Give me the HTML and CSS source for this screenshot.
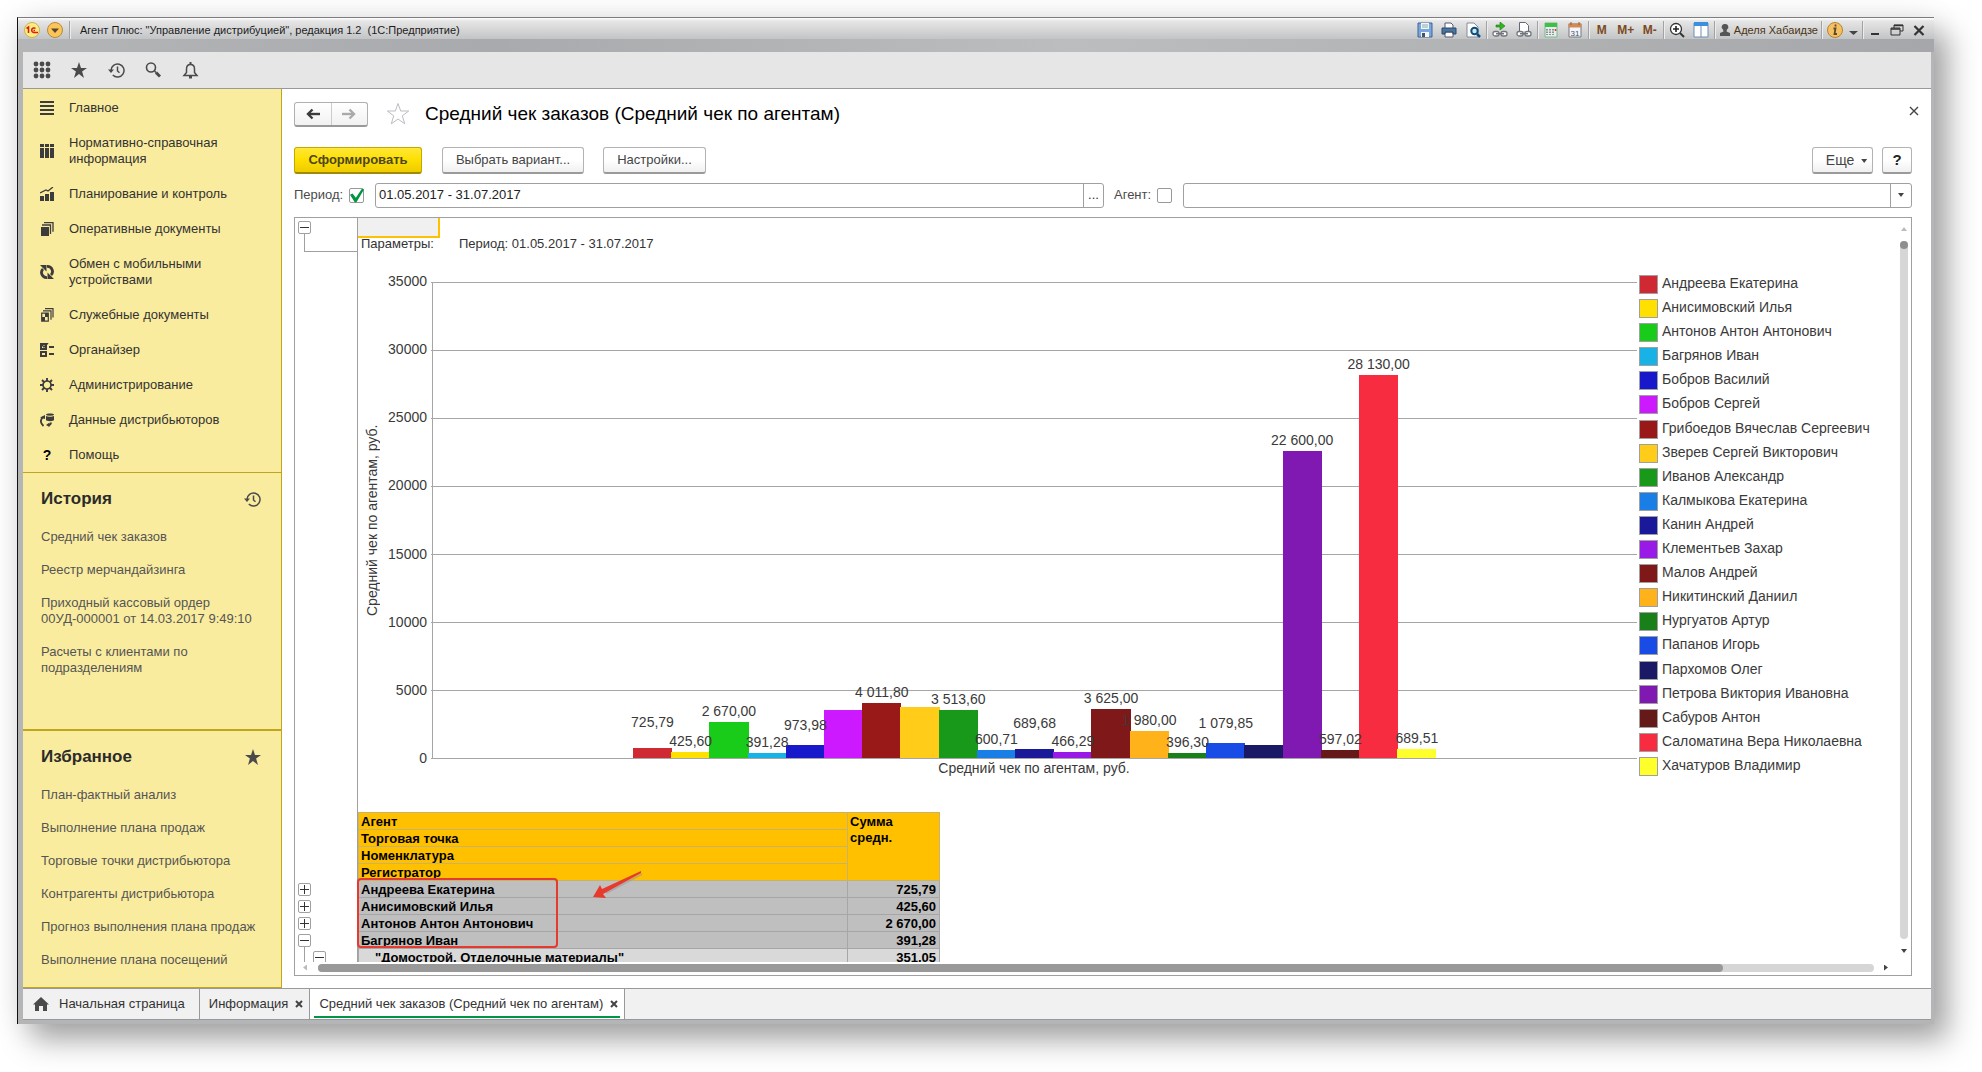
FILE: index.html
```html
<!DOCTYPE html>
<html lang="ru">
<head>
<meta charset="utf-8">
<title>Агент Плюс: Управление дистрибуцией</title>
<link rel="stylesheet" href="styles.css">
</head>
<body>
<svg class="sprite" aria-hidden="true">
  <symbol id="star" viewBox="0 0 16 16"><path fill="currentColor" d="M8 0l2 6h6l-4.900 3.600L13 16l-5-4-5 4 1.900-6.400L0 6h6z"/></symbol>
  <symbol id="history" viewBox="0 0 17 16"><g fill="none" stroke="currentColor"><path stroke-width="1.500" d="M3 8a6.500 6.500 0 1 1 1.800 4.500M9.500 4v4.500l2 1.800"/></g><path fill="currentColor" d="M0 7h6L3 10.500z"/></symbol>
</svg>
<div class="window">
  <header class="titlebar">
    <div class="title-row">
      <svg class="i18" viewBox="0 0 18 18"><circle cx="9" cy="9" r="7.500" fill="#ffec80" stroke="#c9b25a"/><path d="M3.500 7.500L5.500 6v6M12.500 7.500a2.300 2.300 0 1 0-2 4h4.500M12 9.500h-1.500" fill="none" stroke="#d8201a" stroke-width="1.600"/></svg>
      <button class="flat menu-ball" aria-label="Меню"><svg class="i18" viewBox="0 0 18 18"><circle cx="9" cy="9" r="7.500" fill="#fbc55a" stroke="#b98a3a"/><path d="M5 7.500h8L9 12z" fill="#5a4630"/></svg></button>
      <span class="sep"></span>
      <span class="app-name">Агент Плюс: "Управление дистрибуцией", редакция 1.2&nbsp; (1С:Предприятие)</span>
      <div class="tools">
        <button class="flat w24" aria-label="Сохранить"><svg class="i16" viewBox="0 0 16 16"><path d="M1 1h14v14H1z" fill="#7ba7dc" stroke="#3d6599"/><path d="M4 1h8v6H4zM4 10h8v5H4z" fill="#f2f6fa"/><path d="M5 3h6M5 5h6" stroke="#8aa"/><path d="M5 11h3v4H5z" fill="#456"/></svg></button>
        <button class="flat w24" aria-label="Печать"><svg class="i16" viewBox="0 0 16 16"><path d="M4 6V1h6l2 2v3M4 10h8v5H4z" fill="#fff" stroke="#557"/><path d="M1 6h14v6h-3v-2H4v2H1z" fill="#4d749b" stroke="#28496c"/></svg></button>
        <button class="flat w24" aria-label="Просмотр"><svg class="i16" viewBox="0 0 16 16"><path d="M2 1h7l4 4v10H2z" fill="#fff" stroke="#889"/><circle cx="9.500" cy="9" r="3.200" fill="#cfe8f5" stroke="#0d4d7c" stroke-width="2"/><path d="M12 12l3 3" stroke="#0d4d7c" stroke-width="2.500"/></svg></button>
        <span class="sep"></span>
        <button class="flat w24" aria-label="Получить ссылку"><svg class="i16" viewBox="0 0 16 16"><path d="M4 3h4V0l5 4-5 4V5H4z" fill="#2fb51e" stroke="#187c10" stroke-width=".6"/><rect x="1" y="9.500" width="6" height="4.500" rx="2" fill="#fff" stroke="#70757c" stroke-width="1.300"/><rect x="9" y="9.500" width="6" height="4.500" rx="2" fill="#fff" stroke="#70757c" stroke-width="1.300"/><path d="M4 11.700h8" stroke="#70757c" stroke-width="1.500"/></svg></button>
        <button class="flat w24" aria-label="Перейти по ссылке"><svg class="i16" viewBox="0 0 16 16"><path d="M3.500 9V.5h6l3 3V9" fill="#fff" stroke="#667"/><rect x="1" y="9.500" width="6" height="4.500" rx="2" fill="#fff" stroke="#70757c" stroke-width="1.300"/><rect x="9" y="9.500" width="6" height="4.500" rx="2" fill="#fff" stroke="#70757c" stroke-width="1.300"/><path d="M4 11.700h8" stroke="#70757c" stroke-width="1.500"/></svg></button>
        <span class="sep"></span>
        <button class="flat w24" aria-label="Калькулятор"><svg class="i16" viewBox="0 0 16 16"><path d="M2 1h12v14H2z" fill="#e8ecee" stroke="#7b8"/><path d="M2 1h12v4H2z" fill="#3fbf45"/><path d="M4 7v6M7 7v6M10 7v6" stroke="#677" stroke-width="1.500" stroke-dasharray="1.500 1"/><path d="M12.500 7v2" stroke="#d33" stroke-width="1.500"/></svg></button>
        <button class="flat w24" aria-label="Календарь"><svg class="i16" viewBox="0 0 16 16"><path d="M2 2h12v13H2z" fill="#f5f5f7" stroke="#778"/><path d="M1.500 1.500h13v4h-13z" fill="#d08a55"/><path d="M4 0v3M12 0v3" stroke="#965a30"/><text x="8" y="13.500" font-size="8" text-anchor="middle" fill="#456">31</text></svg></button>
        <span class="sep"></span>
        <button class="flat w24 mem">M</button><button class="flat w24 mem">M+</button><button class="flat w24 mem">M-</button>
        <span class="sep"></span>
        <button class="flat w24" aria-label="Масштаб"><svg class="i16" viewBox="0 0 16 16"><circle cx="7" cy="7" r="5.500" fill="#fff" stroke="#333" stroke-width="1.300"/><path d="M7 4v6M4 7h6" stroke="#222" stroke-width="1.600"/><path d="M11 11l4 4" stroke="#333" stroke-width="2"/></svg></button>
        <button class="flat w24" aria-label="Панели"><svg class="i16" viewBox="0 0 16 16"><path d="M1 1h14v14H1z" fill="#fff" stroke="#6d8fb3"/><path d="M1 0h14v4H1z" fill="#3c8fdd"/><path d="M8 4v11" stroke="#6d8fb3"/></svg></button>
        <span class="sep"></span>
        <svg class="i14 person" viewBox="0 0 14 14"><path d="M7 1a3 3 0 0 1 2 5.500l-.5 2L12 10v3H2v-3l3.500-1.500-.5-2A3 3 0 0 1 7 1z" fill="#555"/></svg>
        <span class="user">Аделя Хабаидзе</span>
        <span class="sep"></span>
        <button class="flat w24" aria-label="О программе"><svg class="i18" viewBox="0 0 18 18"><circle cx="9" cy="9" r="7.500" fill="#f5c061" stroke="#b78332"/><path d="M9.500 3.500v2M7.500 7.500h2l-1 5.500h2.500" fill="none" stroke="#5b4a30" stroke-width="1.800"/></svg></button>
        <svg class="i14" viewBox="0 0 14 14"><path d="M2 8h9l-4.500 4z" fill="#444"/></svg>
        <span class="sep"></span>
        <button class="flat w22" aria-label="Свернуть"><svg class="i14" viewBox="0 0 14 14"><path d="M3 11h8" stroke="#333" stroke-width="2"/></svg></button>
        <button class="flat w22" aria-label="Восстановить"><svg class="i14" viewBox="0 0 14 14"><path d="M4 5V2h9v6h-3M1 5h9v7H1z" fill="none" stroke="#333"/><path d="M4 2.500h9M1 6h9" stroke="#333" stroke-width="1.500"/></svg></button>
        <button class="flat w22" aria-label="Закрыть"><svg class="i14" viewBox="0 0 14 14"><path d="M2.500 3l9 9M11.500 3l-9 9" stroke="#333" stroke-width="2.200"/></svg></button>
      </div>
    </div>
  </header>

  <div class="client">
    <nav class="toolbar" aria-label="Инструменты">
      <button class="flat" aria-label="Функции"><svg class="i18" viewBox="0 0 18 18" fill="#4a4a4a"><circle cx="3" cy="3" r="2.400"/><circle cx="9" cy="3" r="2.400"/><circle cx="15" cy="3" r="2.400"/><circle cx="3" cy="9" r="2.400"/><circle cx="9" cy="9" r="2.400"/><circle cx="15" cy="9" r="2.400"/><circle cx="3" cy="15" r="2.400"/><circle cx="9" cy="15" r="2.400"/><circle cx="15" cy="15" r="2.400"/></svg></button>
      <button class="flat" aria-label="Избранное"><svg class="i16"><use href="#star"/></svg></button>
      <button class="flat" aria-label="История"><svg class="i17"><use href="#history"/></svg></button>
      <button class="flat" aria-label="Поиск"><svg class="i16" viewBox="0 0 16 16" fill="none" stroke="#4a4a4a"><circle cx="6" cy="5.500" r="4.500" stroke-width="1.600"/><path d="M9.500 9l1.500 1.500" stroke-width="1.500"/><path d="M11 10.500l4 4" stroke-width="3"/></svg></button>
      <button class="flat" aria-label="Уведомления"><svg class="i17" viewBox="0 0 17 17"><path d="M8.500 2.500c-3 0-4 2-4 4.500v3.500L2 13.500h13l-2.500-3V7c0-2.500-1-4.500-4-4.500z" fill="none" stroke="#4a4a4a" stroke-width="1.500"/><path d="M7.500 0h2v2.500h-2zM7 14h3v2.500H7z" fill="#4a4a4a"/></svg></button>
    </nav>

    <div class="body">
      <aside class="sidebar">
        <nav class="sections">
          <a href="#"><svg class="i14" viewBox="0 0 14 14"><path d="M0 1h14M0 5h14M0 9h14M0 13h14" stroke="#3c3c3c" stroke-width="2"/></svg><span>Главное</span></a>
          <a href="#"><svg class="i14" viewBox="0 0 14 14" fill="#3c3c3c"><path d="M0 0h4v3H0zM5 0h4v3H5zM10 0h4v3h-4zM0 4h4v10H0zM5 4h4v10H5zM10 4h4v10h-4z"/></svg><span>Нормативно-справочная информация</span></a>
          <a href="#"><svg class="i14" viewBox="0 0 14 14"><path d="M0 9h4v5H0zM5 7h4v7H5zM10 5h4v9h-4z" fill="#3c3c3c"/><path d="M0 6l6-3 2 1 5-4" fill="none" stroke="#3c3c3c" stroke-width="1.300"/></svg><span>Планирование и контроль</span></a>
          <a href="#"><svg class="i14" viewBox="0 0 14 14"><path d="M1 5h8v9H1z" fill="#3c3c3c"/><path d="M2 3h8.500v9M4 .7h9v9" fill="none" stroke="#3c3c3c" stroke-width="1.300"/></svg><span>Оперативные документы</span></a>
          <a href="#"><svg class="i14" viewBox="0 0 14 14"><path d="M7 12.500A5 5 0 0 1 3 4M7 1.500A5 5 0 0 1 11 10" fill="none" stroke="#3c3c3c" stroke-width="2.800"/><path d="M0 0h6.500v6.500zM14 14H7.500V7.500z" fill="#3c3c3c"/></svg><span>Обмен с мобильными устройствами</span></a>
          <a href="#"><svg class="i14" viewBox="0 0 14 14"><path d="M1.700 5.200h6.600v8H1.700zM3 2.800h8v9M5 .6h8v9" fill="none" stroke="#3c3c3c" stroke-width="1.200"/><path d="M5 5h3v4H5zM2 9h3v4H2z" fill="#3c3c3c"/></svg><span>Служебные документы</span></a>
          <a href="#"><svg class="i14" viewBox="0 0 14 14" fill="none" stroke="#3c3c3c"><path d="M1 1h5v5H1zM1 9h5v4H1z" stroke-width="2"/><path d="M2 2l2 2 4-4" stroke-width="1.500"/><path d="M9 4h5M9 11h5" stroke-width="2"/></svg><span>Органайзер</span></a>
          <a href="#"><svg class="i14" viewBox="0 0 14 14" fill="none" stroke="#3c3c3c"><circle cx="7" cy="7" r="4" stroke-width="1.700"/><path d="M7 0v3M7 11v3M0 7h3M11 7h3M2 2l2 2M10 10l2 2M12 2l-2 2M4 10l-2 2" stroke-width="1.900"/></svg><span>Администрирование</span></a>
          <a href="#"><svg class="i14" viewBox="0 0 14 14"><path d="M6 1.500C6 0 14 0 14 1.500V7c0 1.500-8 1.500-8 0z" fill="#3c3c3c"/><path d="M6 2.500c2 1 6 1 8 0" stroke="#faec9e" fill="none"/><path d="M3.500 4C0 6 0 10 3.500 13M11 9.500c0 1.500-1 2.500-3 3" fill="none" stroke="#3c3c3c" stroke-width="1.800"/><path d="M0 4.500L5 2v4zM9.500 9.500V14L6 12z" fill="#3c3c3c"/></svg><span>Данные дистрибьюторов</span></a>
          <a href="#"><b class="q">?</b><span>Помощь</span></a>
        </nav>
        <section class="panel history">
          <h2>История <svg class="i17"><use href="#history"/></svg></h2>
          <a href="#">Средний чек заказов</a>
          <a href="#">Реестр мерчандайзинга</a>
          <a href="#">Приходный кассовый ордер<br>00УД-000001 от 14.03.2017 9:49:10</a>
          <a href="#">Расчеты с клиентами по подразделениям</a>
        </section>
        <section class="panel favorites">
          <h2>Избранное <svg class="i16"><use href="#star"/></svg></h2>
          <a href="#">План-фактный анализ</a>
          <a href="#">Выполнение плана продаж</a>
          <a href="#">Торговые точки дистрибьютора</a>
          <a href="#">Контрагенты дистрибьютора</a>
          <a href="#">Прогноз выполнения плана продаж</a>
          <a href="#">Выполнение плана посещений</a>
        </section>
      </aside>

      <main class="page">
        <div class="page-head">
          <div class="nav-pair">
            <button aria-label="Назад"><svg class="i14" viewBox="0 0 14 14"><path d="M3 7h11" stroke="#3c3c3c" stroke-width="2.400"/><path d="M6.500 2.500L2 7l4.500 4.500" fill="none" stroke="#3c3c3c" stroke-width="2.400"/></svg></button>
            <button aria-label="Вперед"><svg class="i14" viewBox="0 0 14 14"><path d="M0 7h11" stroke="#aaa" stroke-width="2.400"/><path d="M7.500 2.500L12 7l-4.500 4.500" fill="none" stroke="#aaa" stroke-width="2.400"/></svg></button>
          </div>
          <svg class="fav" viewBox="0 0 24 24"><path d="M12 1.500l2.700 7.500h8l-6.400 4.800 2.400 8L12 17l-6.700 4.800 2.400-8L1.300 9h8z" fill="#fff" stroke="#b9bdc3"/></svg>
          <h1>Средний чек заказов (Средний чек по агентам)</h1>
          <button class="flat page-close" aria-label="Закрыть"><svg class="i10" viewBox="0 0 10 10"><path d="M1 1l8 8M9 1L1 9" stroke="#444" stroke-width="1.400"/></svg></button>
        </div>
        <div class="commands">
          <button class="btn primary">Сформировать</button>
          <button class="btn variant">Выбрать вариант...</button>
          <button class="btn settings">Настройки...</button>
          <span class="grow"></span>
          <button class="btn more">Еще <i class="tri"></i></button>
          <button class="btn help">?</button>
        </div>
        <div class="filters">
          <label for="period-on">Период:</label>
          <input type="checkbox" id="period-on" checked>
          <div class="field"><input type="text" aria-label="Период" value="01.05.2017 - 31.07.2017"><button aria-label="Выбрать период">...</button></div>
          <label for="agent-on" class="agent-label">Агент:</label>
          <input type="checkbox" id="agent-on">
          <div class="field agent"><select aria-label="Агент"><option></option></select><span class="drop"><i class="tri"></i></span></div>
        </div>

        <div class="report">
          <div class="sheet-view">
            <div class="gutter">
              <div class="group-top"><button class="exp" aria-label="Свернуть"></button></div>
              <div class="group-rows">
                <button class="exp plus" aria-label="Развернуть"></button>
                <button class="exp plus" aria-label="Развернуть"></button>
                <button class="exp plus" aria-label="Развернуть"></button>
                <button class="exp" aria-label="Свернуть"></button>
                <div class="nested"><button class="exp" aria-label="Свернуть"></button></div>
              </div>
            </div>
            <div class="sheet">
              <div class="cell-active"></div>
              <div class="params"><span>Параметры:</span><span>Период: 01.05.2017 - 31.07.2017</span></div>
              <figure class="chart">
                <div class="y-title">Средний чек по агентам, руб.</div>
                <div class="y-axis"><span>35000</span><span>30000</span><span>25000</span><span>20000</span><span>15000</span><span>10000</span><span>5000</span><span>0</span></div>
                <div class="plot">
                  <div class="grid"><i></i><i></i><i></i><i></i><i></i><i></i><i></i><i></i></div>
                  <div class="bars" id="bars"></div>
                </div>
                <ul class="legend" id="legend"></ul>
                <figcaption class="x-title">Средний чек по агентам, руб.</figcaption>
              </figure>
              <div class="table-wrap">
                <table>
                  <thead>
                    <tr><th>Агент</th><th rowspan="4" class="sum">Сумма средн.</th></tr>
                    <tr><th>Торговая точка</th></tr>
                    <tr><th>Номенклатура</th></tr>
                    <tr><th>Регистратор</th></tr>
                  </thead>
                  <tbody>
                    <tr><td>Андреева Екатерина</td><td>725,79</td></tr>
                    <tr><td>Анисимовский Илья</td><td>425,60</td></tr>
                    <tr><td>Антонов Антон Антонович</td><td>2 670,00</td></tr>
                    <tr><td>Багрянов Иван</td><td>391,28</td></tr>
                    <tr class="sub"><td>"Домострой. Отделочные материалы"</td><td>351,05</td></tr>
                  </tbody>
                </table>
                <div class="callout"></div>
                <svg class="arrow" viewBox="0 0 52 30"><path d="M50 3L14 22" stroke="#999" stroke-width="2" opacity=".5"/><path d="M49 0L10 18 8 14 1 26l13 1-3-4L49 2z" fill="#e8392d"/></svg>
              </div>
            </div>
            <div class="vscroll"><i class="tri up"></i><span class="vtrack"><span class="vthumb"></span></span><i class="tri"></i></div>
          </div>
          <div class="hscroll"><i class="tri left"></i><span class="htrack"><span class="hthumb"></span></span><i class="tri right"></i></div>
        </div>
      </main>
    </div>

    <footer class="tabs">
      <div class="tab home"><svg class="i16" viewBox="0 0 16 14"><path d="M8 0l8 7.500h-2V14h-4V9H6v5H2V7.500H0z" fill="#4a4a4a"/></svg><a href="#">Начальная страница</a></div>
      <div class="tab"><a href="#">Информация</a><button class="flat x" aria-label="Закрыть"><svg class="i8" viewBox="0 0 8 8"><path d="M1 1l6 6M7 1L1 7" stroke="#444" stroke-width="2"/></svg></button></div>
      <div class="tab active"><a href="#">Средний чек заказов (Средний чек по агентам)</a><button class="flat x" aria-label="Закрыть"><svg class="i8" viewBox="0 0 8 8"><path d="M1 1l6 6M7 1L1 7" stroke="#444" stroke-width="2"/></svg></button></div>
    </footer>
  </div>
</div>
<script src="chart.js"></script>
</body>
</html>
```
FILE: styles.css
```css
* { box-sizing: border-box; }
html { height: 100%; background: #fff; }
body {
  margin: 0;
  height: 100vh;
  padding: 17px 48px 48px 17px;
  font: 13px/16px "Liberation Sans", Arial, sans-serif;
  color: #333;
  overflow: hidden;
}
a { color: inherit; text-decoration: none; }
h1, h2, figure, ul { margin: 0; padding: 0; }
button, input, select { font: inherit; color: inherit; margin: 0; }
svg { display: block; flex: none; }
.sprite { position: absolute; width: 0; height: 0; }
.i8 { width: 8px; height: 8px; }
.i10 { width: 10px; height: 10px; }
.i14 { width: 14px; height: 14px; }
.i16 { width: 16px; height: 16px; }
.i17 { width: 17px; height: 17px; }
.i18 { width: 18px; height: 18px; }
.flat { border: 0; background: none; padding: 0; display: flex; align-items: center; justify-content: center; }
.grow { flex: 1; }

.window {
  height: 100%;
  display: flex;
  flex-direction: column;
  border-top: 1px solid #7d7d7d;
  border-left: 1px solid #111;
  background: #b4b5b7;
  box-shadow: 14px 16px 28px rgba(0, 0, 0, .34), 0 0 30px rgba(0, 0, 0, .08);
}

/* title bar */
.titlebar { height: 34px; flex: none; background: linear-gradient(90deg, #b4b5b7, #a9aaad 25%, #bcbdbe 55%, #a6a7aa); }
.title-row {
  height: 21px;
  display: flex;
  align-items: center;
  padding: 2px 4px 0 5px;
  background: linear-gradient(#fff 0, #e6e6e6 3px, #c3c4c6 100%);
  font-size: 11px;
  color: #1c1c1c;
}
.menu-ball { margin: 0 5px; }
.sep { width: 1px; height: 18px; background: #a2a2a2; box-shadow: 1px 0 #ececec; flex: none; }
.app-name { margin-left: 10px; flex: 1; white-space: nowrap; }
.tools { display: flex; align-items: center; }
.tools .sep { margin: 0 1px; }
.w24 { width: 24px; }
.w22 { width: 22px; }
.mem { font-size: 12px; font-weight: bold; color: #7c4a20; }
.person { margin-left: 2px; }
.user { margin: 0 2px; color: #4a3413; }

/* client area */
.client { flex: 1; min-height: 0; margin: 0 3px 4px 5px; display: flex; flex-direction: column; background: #fff; }
.toolbar { height: 37px; flex: none; display: flex; align-items: center; gap: 3px; padding-left: 2px; background: #e6e6e6; border-bottom: 1px solid #999; color: #4a4a4a; }
.toolbar .flat { width: 34px; height: 32px; }
.body { flex: 1; min-height: 0; display: flex; }

/* sidebar */
.sidebar { width: 259px; flex: none; display: flex; flex-direction: column; background: #faec9e; border-right: 1px solid #bfa61c; border-bottom: 1px solid #bfa61c; }
.sections { padding-top: 1px; border-bottom: 1px solid #bfa61c; }
.sections a { display: flex; align-items: center; gap: 15px; padding: 10px 40px 9px 17px; }
.q { width: 14px; text-align: center; font-size: 14px; color: #000; }
.panel { padding: 17px 18px 0 18px; color: #555; }
.history { flex: 1; border-bottom: 2px solid #bfa61c; }
.favorites { padding-bottom: 11px; }
.panel h2 { display: flex; justify-content: space-between; align-items: center; font-size: 17px; line-height: 18px; color: #2b2b2b; padding-right: 2px; margin-bottom: 12px; }
.panel h2 svg { color: #4a4a4a; }
.panel a { display: block; padding: 9px 0 8px; white-space: nowrap; }
.history a { padding-right: 50px; white-space: normal; }
.history a:nth-of-type(3) { padding-right: 0; }

/* page */
.page { flex: 1; min-width: 0; display: flex; flex-direction: column; padding: 12px 19px 12px 12px; }
.page-head { display: flex; align-items: center; height: 26px; }
.nav-pair { display: flex; width: 74px; height: 25px; border: 1px solid #b0b0b0; border-bottom: 2px solid #999; border-radius: 3px; background: linear-gradient(#fff, #f2f2f2); }
.nav-pair button { flex: 1; border: 0; background: none; display: flex; align-items: center; justify-content: center; padding: 0; }
.nav-pair button + button { border-left: 1px solid #ccc; }
.fav { width: 24px; height: 24px; margin: 0 15px 0 18px; }
h1 { flex: 1; font-size: 19px; line-height: 24px; font-weight: normal; color: #000; }
.page-close { width: 10px; height: 10px; margin: 0 -7px 6px 0; }
.commands { display: flex; margin-top: 20px; }
.btn { height: 27px; border: 1px solid #b3b3b3; border-bottom: 2px solid #9a9a9a; border-radius: 3px; background: linear-gradient(#fff 50%, #f0f0f0); color: #444; padding: 0; }
.primary { width: 128px; font-weight: bold; background: linear-gradient(#ffe838, #fddf00 50%, #eecb00); border-color: #c3a800 #c3a800 #a08a00; color: #4d4520; }
.variant { width: 142px; margin-left: 20px; }
.settings { width: 103px; margin-left: 19px; }
.more { width: 61px; font-size: 14px; margin-right: 9px; padding-left: 8px; }
.more .tri { display: inline-block; margin: 0 0 2px 3px; }
.help { width: 30px; font-size: 15px; font-weight: bold; color: #222; }
.tri { width: 6px; height: 4px; background: #444; clip-path: polygon(0 0, 100% 0, 50% 100%); flex: none; }
.filters { display: flex; align-items: center; margin-top: 8px; height: 26px; color: #4a4a4a; }
.filters input[type=checkbox] { appearance: none; width: 15px; height: 15px; border: 1px solid #999; border-radius: 2px; background: #fff; display: grid; place-items: end; overflow: visible; flex: none; margin-right: 11px; }
.filters label { width: 55px; }
.filters .agent-label { width: 43px; margin-left: 10px; }
.filters input:checked::before { content: ""; width: 14px; height: 14px; background: #00963f; clip-path: polygon(0 45%, 18% 36%, 42% 66%, 86% 0, 100% 8%, 46% 98%, 34% 98%); }
.field { flex: 1; min-width: 0; height: 25px; display: flex; border: 1px solid #a0a0a0; border-radius: 3px; background: #fff; color: #333; }
.field input { flex: 1; min-width: 0; border: 0; padding: 0 3px; background: none; outline: 0; color: #222; }
.field button { width: 20px; border: 0; border-left: 1px solid #a0a0a0; background: none; padding: 0; }
.field select { flex: 1; border: 0; background: none; appearance: none; }
.drop { width: 21px; border-left: 1px solid #a0a0a0; display: flex; align-items: center; justify-content: center; }

/* report */
.report { flex: 1; min-height: 0; margin-top: 9px; border: 1px solid #a0a0a0; display: flex; flex-direction: column; }
.sheet-view { flex: 1; min-height: 0; display: flex; overflow: hidden; }
.gutter { width: 63px; flex: none; border-right: 1px solid #a0a0a0; padding: 3px 0 0 3px; }
.group-top { height: 31px; margin-bottom: 631px; position: relative; }
.group-top::after { content: ""; position: absolute; left: 6px; right: 0; top: 13px; bottom: 0; border: solid #a0a0a0; border-width: 0 0 1px 1px; }
.exp { display: block; width: 13px; height: 13px; border: 1px solid #a0a0a0; border-radius: 2px; padding: 0; margin: 0 0 4px; background: linear-gradient(#333, #333) center / 9px 1px no-repeat #fff; }
.exp.plus { background: linear-gradient(#333, #333) center / 9px 1px no-repeat, linear-gradient(#333, #333) center / 1px 9px no-repeat, #fff; }
.nested { margin: -4px 0 0 6px; padding: 4px 0 20px 8px; border-left: 1px solid #a0a0a0; }
.sheet { flex: 1; min-width: 0; display: flex; flex-direction: column; }
.cell-active { width: 82px; height: 20px; flex: none; background: #f0f0f0; border: solid #ffc000; border-width: 0 2px 2px 0; }
.params { display: flex; padding-left: 3px; height: 12px; line-height: 12px; flex: none; }
.params span:first-child { width: 98px; }
.chart { flex: none; height: 562px; padding: 32px 0 53px 4px; display: grid; grid-template: 477px auto / 21px 45px 1fr 260px; font-size: 14px; color: #3a3a3a; }
.y-title { writing-mode: vertical-rl; transform: rotate(180deg); text-align: center; line-height: 20px; white-space: nowrap; }
.y-axis { display: flex; flex-direction: column; justify-content: space-between; text-align: right; margin-top: -1px; padding-right: 1px; }
.y-axis span { height: 1px; line-height: 1px; }
.plot { position: relative; border-left: 1px solid #a6a6a6; margin-left: 4px; }
.grid { position: absolute; inset: 0 0 0 -2px; display: flex; flex-direction: column; justify-content: space-between; }
.grid i { height: 1px; background: #a6a6a6; }
.bars { position: absolute; inset: 0 0 1px; display: flex; align-items: flex-end; padding: 0 16.75% 0 16.6%; }
.bar { flex: 1; min-width: 0; margin-right: -1px; position: relative; }
.bar span { position: absolute; z-index: 1; left: 50%; bottom: calc(100% + 3px); transform: translateX(-50%); white-space: nowrap; }
.bar .lift { bottom: calc(100% + 12px); }
.bar .raise { bottom: calc(100% + 18px); }
.legend { list-style: none; display: flex; flex-direction: column; justify-content: space-between; height: 501px; margin: -7px 0 -17px 2px; }
.legend li { display: flex; gap: 4px; line-height: 17px; white-space: nowrap; }
.legend i { width: 19px; height: 19px; border: 1px solid #a0a0a0; }
.x-title { grid-column: 3; text-align: center; line-height: 18px; padding-left: 3px; }

.table-wrap { position: relative; width: 582px; flex: none; }
table { border-collapse: collapse; width: 582px; table-layout: fixed; font-weight: bold; color: #000; }
th, td { height: 17px; padding: 1px 3px 0 2px; line-height: 15px; text-align: left; vertical-align: top; border: 1px solid #cbb26a; }
th { background: #ffc000; }
th.sum { width: 92px; padding-right: 30px; line-height: 16px; }
td { background: #bfbfbf; border-color: #a6a6a6; }
td:last-child { text-align: right; }
.sub td { background: #d9d9d9; }
.sub td:first-child { padding-left: 16px; }
.callout { position: absolute; left: -1px; top: 66px; width: 201px; height: 70px; border: 2px solid #e63a2e; border-radius: 4px; }
.arrow { position: absolute; left: 234px; top: 59px; width: 52px; height: 30px; }

.vscroll { width: 14px; flex: none; display: flex; flex-direction: column; align-items: center; padding: 9px 0 9px; }
.vtrack { flex: 1; width: 8px; margin: 10px 0; border-radius: 4px; background: #d6d6d6; }
.vthumb { display: block; height: 8px; border-radius: 4px; background: #8f8f8f; }
.up { clip-path: polygon(50% 0, 100% 100%, 0 100%); background: #bbb; }
.left, .right { width: 4px; height: 6px; }
.left { clip-path: polygon(100% 0, 100% 100%, 0 50%); background: #bbb; }
.right { clip-path: polygon(0 0, 100% 50%, 0 100%); }
.hscroll { height: 13px; flex: none; display: flex; align-items: center; padding: 0 23px 2px 8px; }
.htrack { flex: 1; height: 8px; margin: 0 10px 0 11px; border-radius: 4px; background: #d6d6d6; }
.hthumb { display: block; width: 90.3%; height: 8px; border-radius: 4px; background: #999; }

/* open pages */
.tabs { height: 32px; flex: none; display: flex; background: #f1f1f1; border-top: 1px solid #999; border-bottom: 1px solid #999; }
.tab { display: flex; align-items: center; gap: 7px; padding: 0 6px 0 9px; border-right: 1px solid #999; white-space: nowrap; }
.home { gap: 10px; padding: 0 14px 0 10px; }
.tab.active { background: linear-gradient(#009646, #009646) center bottom 1px / calc(100% - 8px) 2px no-repeat #fff; }
```
FILE: chart.js
```js
const agents = [
  ["Андреева Екатерина", 725.79, "#cf2a34", "725,79", "raise"],
  ["Анисимовский Илья", 425.6, "#ffe000", "425,60"],
  ["Антонов Антон Антонович", 2670, "#1acc1a", "2 670,00"],
  ["Багрянов Иван", 391.28, "#19b2e6", "391,28"],
  ["Бобров Василий", 973.98, "#1919cc", "973,98", "lift"],
  ["Бобров Сергей", 3530, "#cc19ff", ""],
  ["Грибоедов Вячеслав Сергеевич", 4011.8, "#991919", "4 011,80"],
  ["Зверев Сергей Викторович", 3750, "#ffcc19", ""],
  ["Иванов Александр", 3513.6, "#199919", "3 513,60"],
  ["Калмыкова Екатерина", 600.71, "#197fe6", "600,71"],
  ["Канин Андрей", 689.68, "#191999", "689,68", "raise"],
  ["Клементьев Захар", 466.29, "#9919e6", "466,29"],
  ["Малов Андрей", 3625, "#7f1919", "3 625,00"],
  ["Никитинский Даниил", 1980, "#ffb219", "1 980,00"],
  ["Нургуатов Артур", 396.3, "#197f19", "396,30"],
  ["Папанов Игорь", 1079.85, "#194ce6", "1 079,85", "lift"],
  ["Пархомов Олег", 950, "#191966", ""],
  ["Петрова Виктория Ивановна", 22600, "#7f19b2", "22 600,00"],
  ["Сабуров Антон", 597.02, "#661919", "597,02"],
  ["Саломатина Вера Николаевна", 28130, "#f82c41", "28 130,00"],
  ["Хачатуров Владимир", 689.51, "#ffff2b", "689,51"]
];
const max = 35000;
const bars = document.getElementById("bars");
const legend = document.getElementById("legend");
for (const [name, value, color, label, place] of agents) {
  const bar = document.createElement("div");
  bar.className = "bar";
  bar.style.height = (value / max * 100) + "%";
  bar.style.background = color;
  if (label) {
    const text = document.createElement("span");
    text.textContent = label;
    if (place) text.className = place;
    bar.append(text);
  }
  bars.append(bar);
  const item = document.createElement("li");
  const swatch = document.createElement("i");
  swatch.style.background = color;
  item.append(swatch, name);
  legend.append(item);
}
```
